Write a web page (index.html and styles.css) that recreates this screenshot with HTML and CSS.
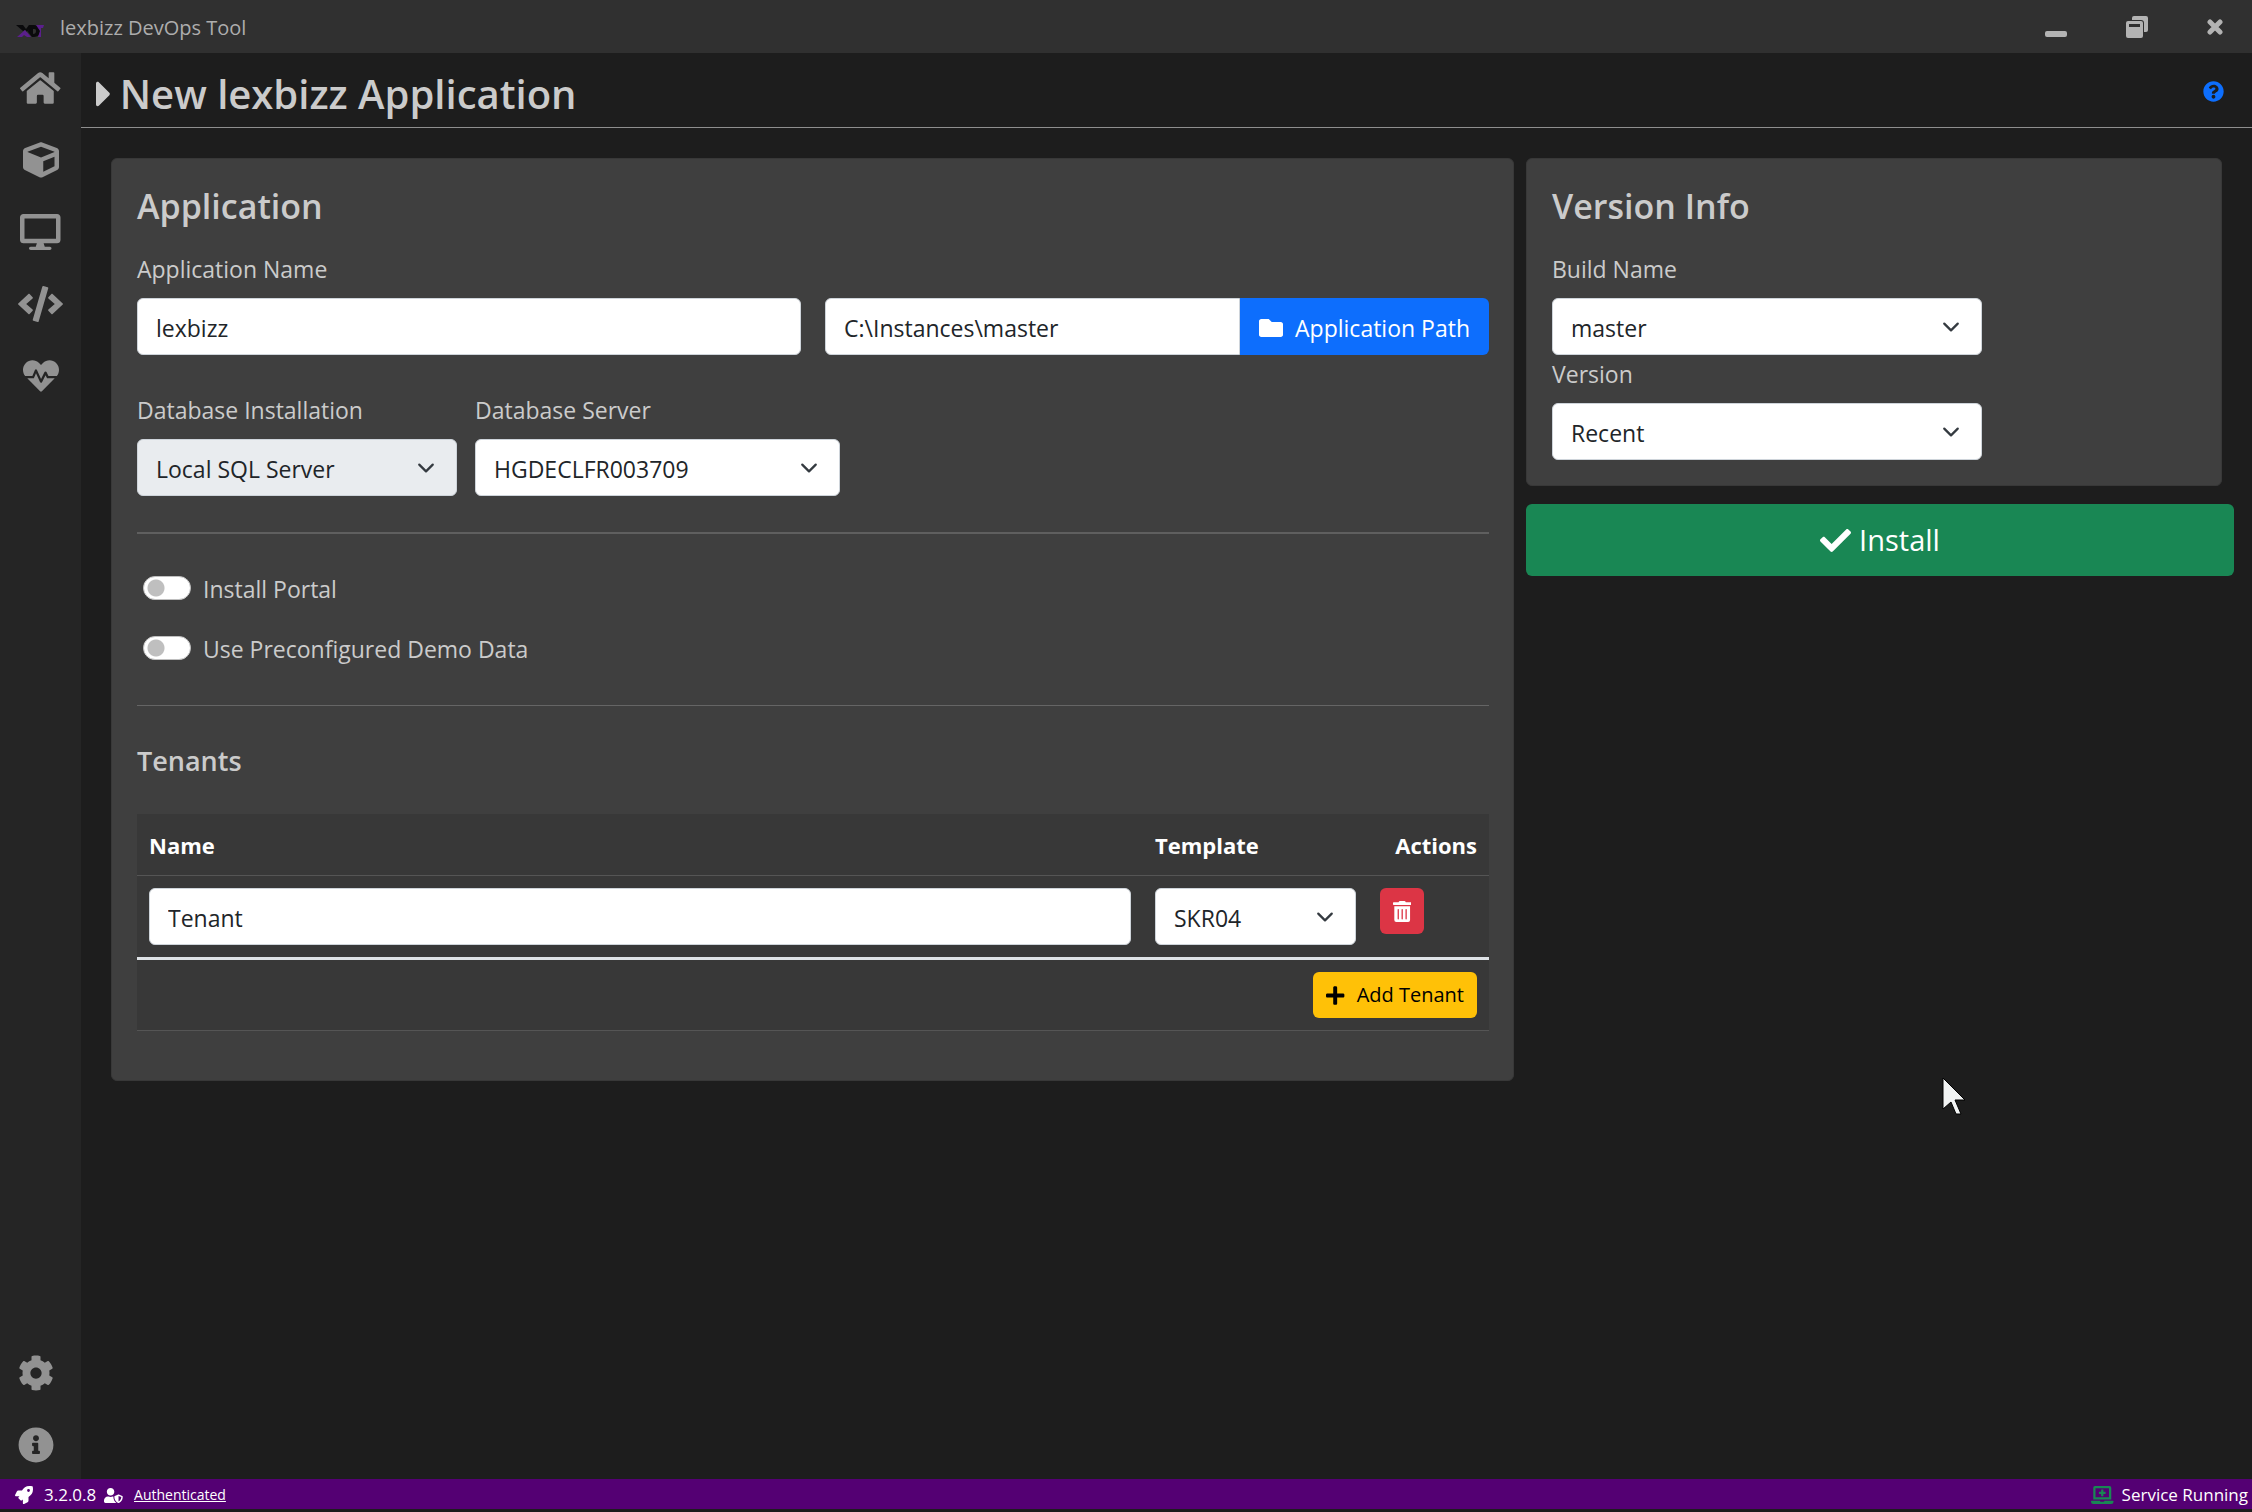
FILE: index.html
```html
<!DOCTYPE html>
<html lang="en">
<head>
    <meta charset="UTF-8">
    <meta name="viewport" content="width=device-width, initial-scale=1.0">
    <title>lexbizz DevOps Tool</title>
    <link rel="stylesheet" href="styles.css">
</head>
<body>
    <!-- Title bar -->
    <header class="titlebar">
        <svg class="logo" viewBox="0 0 28 12" aria-hidden="true">
            <path fill="#0a0a0c" d="M0 0h7l3 4 3-4h3l-5 7-2-2-2 1z"/>
            <path fill="#5b1f8c" d="M9 5l6 7h-4l-3-2-2 2H1z"/>
            <path fill="#0a0a0c" fill-rule="evenodd" d="M13 0h5c4 0 6 3 6 6s-2 6-6 6h-2l-4-5zM17 4v5c2 0 3-1 3-3s-1-2-3-2z"/>
            <path fill="#5b1f8c" d="M20 0h8l-1 3h-2v9h-3l2-6z"/>
        </svg>
        <span class="app-title">lexbizz DevOps Tool</span>
        <div class="window-buttons">
            <button type="button" aria-label="Minimize">
                <svg width="22" height="22" viewBox="0 0 22 22"><rect x="0" y="15" width="22" height="6" rx="2"/></svg>
            </button>
            <button type="button" aria-label="Restore">
                <svg width="22" height="22" viewBox="0 0 22 22">
                    <path d="M8 0h12a2 2 0 0 1 2 2v12a2 2 0 0 1-2 2h-2V7a3 3 0 0 0-3-3H6V2a2 2 0 0 1 2-2z"/>
                    <path fill-rule="evenodd" d="M2 5h13a2 2 0 0 1 2 2v13a2 2 0 0 1-2 2H2a2 2 0 0 1-2-2V7a2 2 0 0 1 2-2zM3 8v3h11V8z"/>
                </svg>
            </button>
            <button type="button" aria-label="Close">
                <svg width="16" height="22" viewBox="0 0 16 22"><path d="M3 6l10 10M13 6L3 16" fill="none" stroke="currentColor" stroke-width="5" stroke-linecap="round"/></svg>
            </button>
        </div>
    </header>

    <div class="layout">
        <!-- Sidebar -->
        <nav class="sidebar">
            <div class="nav-group">
                <a href="#" aria-label="Home"><svg class="icon" viewBox="0 0 576 512"><path d="M280.37 148.26L96 300.11V464a16 16 0 0 0 16 16l112.06-.29a16 16 0 0 0 15.92-16V368a16 16 0 0 1 16-16h64a16 16 0 0 1 16 16v95.64a16 16 0 0 0 16 16.05L464 480a16 16 0 0 0 16-16V300L295.67 148.26a12.19 12.19 0 0 0-15.3 0zM571.6 251.47L488 182.56V44.05a12 12 0 0 0-12-12h-56a12 12 0 0 0-12 12v72.61L318.47 43a48 48 0 0 0-61 0L4.34 251.47a12 12 0 0 0-1.6 16.9l25.5 31A12 12 0 0 0 45.15 301l235.22-193.74a12.19 12.19 0 0 1 15.3 0L530.9 301a12 12 0 0 0 16.9-1.6l25.5-31a12 12 0 0 0-1.7-16.93z"/></svg></a>
                <a href="#" aria-label="Builds"><svg class="icon" viewBox="0 0 512 512"><path d="M239.1 6.3l-208 78c-18.7 7-31.1 25-31.1 45v225.1c0 18.2 10.3 34.8 26.5 42.9l208 104c13.5 6.8 29.4 6.8 42.9 0l208-104c16.3-8.1 26.5-24.8 26.5-42.9V129.3c0-20-12.4-37.9-31.1-44.9l-208-78C262 2.2 250 2.2 239.1 6.3zM256 68.4l192 72v1.1l-192 78-192-78v-1.1l192-72zm32 356V275.5l160-65v133.9l-160 80z"/></svg></a>
                <a href="#" aria-label="Applications"><svg class="icon" viewBox="0 0 576 512"><path d="M528 0H48C21.5 0 0 21.5 0 48v320c0 26.5 21.5 48 48 48h192l-16 48h-72c-13.3 0-24 10.7-24 24s10.7 24 24 24h272c13.3 0 24-10.7 24-24s-10.7-24-24-24h-72l-16-48h192c26.5 0 48-21.5 48-48V48c0-26.5-21.5-48-48-48zm-16 352H64V64h448v288z"/></svg></a>
                <a href="#" aria-label="Development"><svg class="icon" viewBox="0 0 640 512"><path d="M278.9 511.5l-61-17.7c-6.4-1.8-10-8.5-8.2-14.9L346.2 8.7c1.8-6.4 8.5-10 14.9-8.2l61 17.7c6.4 1.8 10 8.5 8.2 14.9L293.8 503.3c-1.9 6.4-8.5 10.1-14.9 8.2zm-114-112.2l43.5-46.4c4.6-4.9 4.3-12.7-.8-17.2L117 256l90.6-79.7c5.1-4.5 5.5-12.3.8-17.2l-43.5-46.4c-4.5-4.8-12.1-5.1-17-.5L3.8 247.2c-5.1 4.7-5.1 12.8 0 17.5l144.1 135.1c4.9 4.6 12.5 4.4 17-.5zm327.2.6l144.1-135.1c5.1-4.7 5.1-12.8 0-17.5L492.1 112.1c-4.8-4.5-12.4-4.3-17 .5L431.6 159c-4.6 4.9-4.3 12.7.8 17.2L523 256l-90.6 79.7c-5.1 4.5-5.5 12.3-.8 17.2l43.5 46.4c4.5 4.9 12.1 5.1 17 .6z"/></svg></a>
                <a href="#" aria-label="Health"><svg class="icon" viewBox="0 0 512 512"><path d="M320.2 243.8l-49.7 99.4c-6 12.1-23.4 11.7-28.9-.6l-56.9-126.3-30 71.7H60.6l182.5 186.5c7.1 7.3 18.6 7.3 25.7 0L451.4 288H342.3l-22.1-44.2zM473.7 73.9l-2.4-2.5c-51.5-52.6-135.8-52.6-187.4 0L256 100l-27.9-28.5c-51.5-52.7-135.9-52.7-187.4 0l-2.4 2.4C-10.4 123.7-12.5 203 31 256h102.4l35.9-86.2c5.4-12.9 23.6-13.1 29.3-.4l58.2 129.3 49-97.9c5.9-11.8 22.7-11.8 28.6 0l27.6 55.2H481c43.5-53 41.4-132.3-7.3-182.1z"/></svg></a>
            </div>
            <div class="nav-group nav-bottom">
                <a href="#" aria-label="Settings"><svg class="icon" viewBox="0 0 512 512"><path d="M487.4 315.7l-42.6-24.6c4.3-23.2 4.3-47 0-70.2l42.6-24.6c4.9-2.8 7.1-8.6 5.5-14-11.1-35.6-30-67.8-54.7-94.6-3.8-4.1-10-5.1-14.8-2.3L380.8 110c-17.9-15.4-38.5-27.3-60.8-35.1V25.8c0-5.6-3.9-10.5-9.4-11.7-36.7-8.2-74.3-7.8-109.2 0-5.5 1.2-9.4 6.1-9.4 11.7V75c-22.2 7.9-42.8 19.8-60.8 35.1L88.7 85.5c-4.9-2.8-11-1.9-14.8 2.3-24.7 26.7-43.6 58.9-54.7 94.6-1.7 5.4.6 11.2 5.5 14L67.3 221c-4.3 23.2-4.3 47 0 70.2l-42.6 24.6c-4.9 2.8-7.1 8.6-5.5 14 11.1 35.6 30 67.8 54.7 94.6 3.8 4.1 10 5.1 14.8 2.3l42.6-24.6c17.9 15.4 38.5 27.3 60.8 35.1v49.2c0 5.6 3.9 10.5 9.4 11.7 36.7 8.2 74.3 7.8 109.2 0 5.5-1.2 9.4-6.1 9.4-11.7v-49.2c22.2-7.9 42.8-19.8 60.8-35.1l42.6 24.6c4.9 2.8 11 1.9 14.8-2.3 24.7-26.7 43.6-58.9 54.7-94.6 1.5-5.5-.7-11.3-5.6-14.1zM256 336c-44.1 0-80-35.9-80-80s35.9-80 80-80 80 35.9 80 80-35.9 80-80 80z"/></svg></a>
                <a href="#" aria-label="About"><svg class="icon" viewBox="0 0 512 512"><path d="M256 8C119.043 8 8 119.083 8 256c0 136.997 111.043 248 248 248s248-111.003 248-248C504 119.083 392.957 8 256 8zm0 110c23.196 0 42 18.804 42 42s-18.804 42-42 42-42-18.804-42-42 18.804-42 42-42zm56 254c0 6.627-5.373 12-12 12h-88c-6.627 0-12-5.373-12-12v-24c0-6.627 5.373-12 12-12h12v-64h-12c-6.627 0-12-5.373-12-12v-24c0-6.627 5.373-12 12-12h64c6.627 0 12 5.373 12 12v100h12c6.627 0 12 5.373 12 12v24z"/></svg></a>
            </div>
        </nav>

        <main class="main">
            <div class="page-header">
                <h1>
                    <svg class="caret" viewBox="0 0 192 512" aria-hidden="true"><path d="M0 384.662V127.338c0-17.818 21.543-26.741 34.142-14.142l128.662 128.662c7.81 7.81 7.81 20.474 0 28.284L34.142 398.804C21.543 411.404 0 402.48 0 384.662z"/></svg>
                    New lexbizz Application
                </h1>
                <a class="help" href="#" aria-label="Help"><svg viewBox="0 0 512 512"><path d="M504 256c0 136.997-111.043 248-248 248S8 392.997 8 256C8 119.083 119.043 8 256 8s248 111.083 248 248zM262.655 90c-54.497 0-89.255 22.957-116.549 63.758-3.536 5.286-2.353 12.415 2.715 16.258l34.699 26.31c5.205 3.947 12.621 3.008 16.665-2.122 17.864-22.658 30.113-35.797 57.303-35.797 20.429 0 45.698 13.148 45.698 32.958 0 14.976-12.363 22.667-32.534 33.976C247.128 238.528 216 254.941 216 296v4c0 6.627 5.373 12 12 12h56c6.627 0 12-5.373 12-12v-1.333c0-28.462 83.186-29.647 83.186-106.667 0-58.002-60.165-102-116.531-102zM256 338c-25.365 0-46 20.635-46 46 0 25.364 20.635 46 46 46s46-20.636 46-46c0-25.365-20.635-46-46-46z"/></svg></a>
            </div>

            <form class="content">
                <!-- Application -->
                <section class="card">
                    <h2>Application</h2>
                    <div class="form-row halves">
                        <div class="form-group">
                            <label for="appName">Application Name</label>
                            <input class="control" type="text" id="appName" value="lexbizz">
                        </div>
                        <div class="input-group">
                            <input class="control" type="text" id="appPath" aria-label="Application Path" value="C:\Instances\master">
                            <button type="button" class="btn btn-primary">
                                <svg viewBox="0 0 512 512"><path d="M464 128H272l-64-64H48C21.49 64 0 85.49 0 112v288c0 26.51 21.49 48 48 48h416c26.51 0 48-21.49 48-48V176c0-26.51-21.49-48-48-48z"/></svg>
                                Application Path
                            </button>
                        </div>
                    </div>
                    <div class="form-row">
                        <div class="form-group db-install">
                            <label for="dbInstall">Database Installation</label>
                            <select class="control" id="dbInstall" disabled>
                                <option>Local SQL Server</option>
                            </select>
                        </div>
                        <div class="form-group db-server">
                            <label for="dbServer">Database Server</label>
                            <select class="control" id="dbServer">
                                <option>HGDECLFR003709</option>
                            </select>
                        </div>
                    </div>

                    <hr class="thick">

                    <div class="switches">
                        <div class="switch">
                            <input type="checkbox" id="installPortal">
                            <label for="installPortal">Install Portal</label>
                        </div>
                        <div class="switch">
                            <input type="checkbox" id="demoData">
                            <label for="demoData">Use Preconfigured Demo Data</label>
                        </div>
                    </div>

                    <hr>

                    <!-- Tenants -->
                    <h3>Tenants</h3>
                    <table class="tenants">
                        <thead>
                            <tr>
                                <th>Name</th>
                                <th class="col-template">Template</th>
                                <th class="col-actions">Actions</th>
                            </tr>
                        </thead>
                        <tbody>
                            <tr>
                                <td><input class="control" type="text" aria-label="Tenant name" value="Tenant"></td>
                                <td>
                                    <select class="control" aria-label="Template">
                                        <option>SKR04</option>
                                    </select>
                                </td>
                                <td>
                                    <button type="button" class="btn btn-small btn-danger" aria-label="Delete tenant">
                                        <svg viewBox="0 0 448 512"><path d="M32 464a48 48 0 0 0 48 48h288a48 48 0 0 0 48-48V128H32zm272-256a16 16 0 0 1 32 0v224a16 16 0 0 1-32 0zm-96 0a16 16 0 0 1 32 0v224a16 16 0 0 1-32 0zm-96 0a16 16 0 0 1 32 0v224a16 16 0 0 1-32 0zM432 32H312l-9.4-18.7A24 24 0 0 0 281.1 0H166.8a23.72 23.72 0 0 0-21.4 13.3L136 32H16A16 16 0 0 0 0 48v32a16 16 0 0 0 16 16h416a16 16 0 0 0 16-16V48a16 16 0 0 0-16-16z"/></svg>
                                    </button>
                                </td>
                            </tr>
                        </tbody>
                        <tfoot>
                            <tr>
                                <td colspan="3">
                                    <button type="button" class="btn btn-small btn-warning">
                                        <svg viewBox="0 0 448 512"><path d="M416 208H272V64c0-17.67-14.33-32-32-32h-32c-17.67 0-32 14.33-32 32v144H32c-17.67 0-32 14.33-32 32v32c0 17.67 14.33 32 32 32h144v144c0 17.67 14.33 32 32 32h32c17.67 0 32-14.33 32-32V304h144c17.67 0 32-14.33 32-32v-32c0-17.67-14.33-32-32-32z"/></svg>
                                        Add Tenant
                                    </button>
                                </td>
                            </tr>
                        </tfoot>
                    </table>
                </section>

                <!-- Version -->
                <div class="side">
                    <section class="card">
                        <h2>Version Info</h2>
                        <div class="form-group">
                            <label for="buildName">Build Name</label>
                            <select class="control" id="buildName">
                                <option>master</option>
                            </select>
                        </div>
                        <div class="form-group">
                            <label for="version">Version</label>
                            <select class="control" id="version">
                                <option>Recent</option>
                            </select>
                        </div>
                    </section>
                    <button type="button" class="btn btn-success">
                        <svg viewBox="0 0 512 512"><path d="M173.898 439.404l-166.4-166.4c-9.997-9.997-9.997-26.206 0-36.204l36.203-36.204c9.997-9.998 26.207-9.998 36.204 0L192 312.69 432.095 72.596c9.997-9.997 26.207-9.997 36.204 0l36.203 36.204c9.997 9.997 9.997 26.206 0 36.204l-294.4 294.401c-9.998 9.997-26.207 9.997-36.204-.001z"/></svg>
                        Install
                    </button>
                </div>
            </form>
        </main>
    </div>

    <!-- Status bar -->
    <footer class="statusbar">
        <svg class="rocket" viewBox="0 0 512 512" aria-hidden="true"><path d="M505.12 19.094c-1.19-5.531-6.658-11-12.207-12.188C460.716 0 435.507 0 410.407 0 307.175 0 245.269 55.203 199.052 128H94.838c-16.348.016-35.557 11.875-42.887 26.484L2.516 253.297A28.4 28.4 0 0 0 0 264a24 24 0 0 0 24.006 24h103.81l-22.474 22.469c-11.366 11.361-12.997 32.257 0 45.25l50.904 50.906c11.156 11.188 32.156 13.156 45.277 0l22.475-22.469V488a24 24 0 0 0 24.005 24 28.56 28.56 0 0 0 10.707-2.516l98.729-49.39c14.629-7.297 26.508-26.5 26.508-42.86V312.797c72.597-46.313 128.035-108.406 128.035-211.094.093-25.203.093-50.406-6.862-82.609zM384.04 168a40 40 0 1 1 40.01-40 40.02 40.02 0 0 1-40.01 40z"/></svg>
        <span class="version">3.2.0.8</span>
        <svg class="user" viewBox="0 0 640 512" aria-hidden="true"><path d="M622.3 271.1l-115.2-45c-4.1-1.6-12.6-3.7-22.2 0l-115.2 45c-10.7 4.2-17.7 14-17.7 24.9 0 111.6 68.7 188.8 132.9 213.9 9.6 3.7 18 1.6 22.2 0C558.4 489.9 640 420.5 640 296c0-10.9-7-20.7-17.7-24.9zM496 462.4V273.3l95.5 37.3c-5.6 87.1-60.9 135.4-95.5 151.8zM224 256c70.7 0 128-57.3 128-128S294.7 0 224 0 96 57.3 96 128s57.3 128 128 128zm96 40c0-2.5.8-4.8 1.1-7.2-2.5-.1-4.9-.8-7.5-.8h-16.7c-22.2 10.2-46.9 16-72.9 16s-50.6-5.8-72.9-16h-16.7C60.2 288 0 348.2 0 422.4V464c0 26.5 21.5 48 48 48h352c6.8 0 13.3-1.5 19.2-4-54-42.9-99.2-116.7-99.2-212z"/></svg>
        <a class="auth" href="#">Authenticated</a>
        <div class="service">
            <svg viewBox="0 0 640 512" aria-hidden="true"><path d="M232 224h56v56a8 8 0 0 0 8 8h48a8 8 0 0 0 8-8v-56h56a8 8 0 0 0 8-8v-48a8 8 0 0 0-8-8h-56v-56a8 8 0 0 0-8-8h-48a8 8 0 0 0-8 8v56h-56a8 8 0 0 0-8 8v48a8 8 0 0 0 8 8zM576 48a48.14 48.14 0 0 0-48-48H112a48.14 48.14 0 0 0-48 48v336h512zm-64 272H128V64h384zm112 96H381.54c-.74 19.81-14.71 32-32.74 32H288c-18.69 0-33-17.47-32.77-32H16a16 16 0 0 0-16 16v16a64.19 64.19 0 0 0 64 64h512a64.19 64.19 0 0 0 64-64v-16a16 16 0 0 0-16-16z"/></svg>
            <span>Service Running</span>
        </div>
    </footer>

    <!-- Mouse pointer -->
    <svg class="pointer" viewBox="0 0 24 38" aria-hidden="true"><path d="M1 1v31l8-7 5 12h5l-6-14h10z" fill="#f1f3f3" stroke="#000"/></svg>
</body>
</html>
```
FILE: styles.css
```css
* {
    box-sizing: border-box;
}

body {
    margin: 0;
    min-height: 100vh;
    display: flex;
    flex-direction: column;
    background-color: #1d1d1d;
    color: #cbcbcb;
    font-family: "Open Sans", "Segoe UI", sans-serif;
    font-size: 23px;
    line-height: 36px;
}

svg {
    fill: currentColor;
    flex: none;
}

button, input, select {
    font: inherit;
}

/* Title bar */
.titlebar {
    display: flex;
    align-items: center;
    height: 53px;
    padding: 0 29px 0 16px;
    background-color: #303030;
    color: #adadad;
}

.logo {
    width: 28px;
    height: 12px;
    margin: 8px 16px 0 0;
}

.app-title {
    font-size: 20px;
    padding-top: 2px;
}

.window-buttons {
    display: flex;
    gap: 59px;
    margin-left: auto;
}

.window-buttons button {
    display: flex;
    padding: 0;
    border: none;
    background: none;
    color: #b3b3b3;
    cursor: pointer;
}

.layout {
    flex: 1;
    display: flex;
}

/* Sidebar */
.sidebar {
    display: flex;
    flex-direction: column;
    justify-content: space-between;
    width: 81px;
    background-color: #252525;
}

.nav-group {
    display: flex;
    flex-direction: column;
    align-items: center;
    gap: 36px;
    padding: 17px 0;
}

.nav-bottom {
    padding: 15px 9px 16px 0;
}

.sidebar a {
    display: flex;
    color: #929292;
}

.icon {
    height: 36px;
}

/* Page header */
.main {
    flex: 1;
    min-width: 0;
}

.page-header {
    display: flex;
    justify-content: space-between;
    align-items: flex-start;
    padding: 16px 28px 8px 15px;
    border-bottom: 1px solid #8e8e8e;
}

h1 {
    display: flex;
    align-items: center;
    gap: 8px;
    margin: 0;
    font-size: 40px;
    font-weight: 600;
    line-height: 50px;
}

.caret {
    height: 42px;
}

.help {
    display: flex;
    padding-top: 12px;
    color: #0d6efd;
}

.help svg {
    height: 21px;
}

/* Cards */
.content {
    display: grid;
    grid-template-columns: 1403fr 708fr;
    gap: 12px;
    align-items: start;
    padding: 30px 18px 30px 30px;
}

.card {
    padding: 25px 24px 25px 25px;
    border: 1px solid #383838;
    border-radius: 6px;
    background-color: #3f3f3f;
}

h2 {
    margin: 0 0 22px;
    font-size: 34px;
    font-weight: 600;
    line-height: 44px;
}

h3 {
    margin: 0 0 34px;
    font-size: 27px;
    font-weight: 600;
    line-height: 38px;
}

hr {
    margin: 39px 0 36px;
    border: none;
    border-top: 1px solid #656565;
}

hr.thick {
    margin: 36px 0;
    border-top: 2px solid #5f5f5f;
}

/* Form */
.form-row {
    display: flex;
    align-items: flex-end;
    gap: 18px;
}

.form-row + .form-row {
    margin-top: 36px;
}

.halves {
    display: grid;
    grid-template-columns: 1fr 1fr;
    gap: 24px;
}

.form-group label {
    display: block;
    padding-top: 1px;
    margin-bottom: 11px;
}

.control {
    display: block;
    width: 100%;
    height: 57px;
    padding: 2px 18px 0;
    border: 1px solid #ced4da;
    border-radius: 6px;
    background-color: #fff;
    color: #212529;
}

select.control {
    appearance: none;
    background-image: url("data:image/svg+xml,%3Csvg xmlns='http://www.w3.org/2000/svg' viewBox='0 0 16 16'%3E%3Cpath fill='none' stroke='%23343a40' stroke-linecap='round' stroke-linejoin='round' stroke-width='2' d='M2 5l6 6 6-6'/%3E%3C/svg%3E");
    background-repeat: no-repeat;
    background-position: right 18px center;
    background-size: 24px 18px;
}

select.control:disabled {
    background-color: #e9ecef;
    opacity: 1;
}

.db-install {
    width: 320px;
}

.db-server {
    width: 365px;
}

.input-group {
    display: flex;
}

.input-group .control {
    flex: 1;
    min-width: 0;
    border-radius: 6px 0 0 6px;
}

.switches {
    display: flex;
    flex-direction: column;
    gap: 24px;
}

.switch {
    display: flex;
    align-items: center;
    gap: 12px;
    height: 36px;
    padding-left: 6px;
}

.switch label {
    padding-top: 2px;
}

.switch input {
    appearance: none;
    width: 48px;
    height: 24px;
    margin: 0;
    border: 1px solid #bfbfbf;
    border-radius: 24px;
    background: #fff radial-gradient(circle 9px at 12px center, #bfbfbf 8px, #fff 9px) no-repeat;
}

/* Buttons */
.btn {
    display: flex;
    align-items: center;
    justify-content: center;
    border: none;
    border-radius: 6px;
    color: #fff;
    cursor: pointer;
}

.btn-primary {
    gap: 12px;
    height: 57px;
    padding: 2px 19px 0;
    border-radius: 0 6px 6px 0;
    background-color: #0d6efd;
}

.btn-primary svg {
    height: 24px;
}

.btn-small {
    gap: 12px;
    height: 46px;
    padding: 0 13px;
    font-size: 20px;
}

.btn-small svg {
    height: 21px;
}

.btn-danger {
    background-color: #dc3545;
}

.btn-warning {
    margin-left: auto;
    background-color: #ffc107;
    color: #000;
}

.btn-success {
    gap: 8px;
    width: 100%;
    height: 72px;
    margin-top: 18px;
    background-color: #198754;
    font-size: 29px;
}

.btn-success svg {
    height: 31px;
}

/* Tenants table */
.tenants {
    width: 100%;
    margin-bottom: 24px;
    border-collapse: separate;
    border-spacing: 0;
    table-layout: fixed;
    background-color: #383838;
}

.tenants th, .tenants td {
    padding: 12px;
    text-align: left;
    vertical-align: top;
    border-bottom: 1px solid #555;
}

.tenants th {
    padding-top: 13px;
    color: #fff;
    font-size: 22px;
}

.tenants tbody td {
    border-bottom: 3px solid #dee2e6;
}

.col-template {
    width: 225px;
}

.tenants .col-actions {
    width: 121px;
    text-align: right;
}

.side .card {
    margin-right: 12px;
}

.side .control {
    width: calc(100% * 2 / 3);
}

/* Status bar */
.statusbar {
    display: flex;
    align-items: center;
    height: 30px;
    margin-bottom: 3px;
    padding: 2px 4px 0 15px;
    background-color: #540073;
    color: #fff;
    font-size: 17px;
}

.rocket {
    height: 18px;
}

.version {
    margin: 0 8px 0 11px;
}

.user {
    height: 15px;
}

.auth {
    margin-left: 11px;
    color: #fff;
    font-size: 14px;
}

.service {
    display: flex;
    align-items: center;
    gap: 8px;
    margin-left: auto;
}

.service svg {
    height: 18px;
    color: #198754;
}

.pointer {
    position: absolute;
    left: 1942px;
    top: 1077px;
    width: 24px;
}
```
